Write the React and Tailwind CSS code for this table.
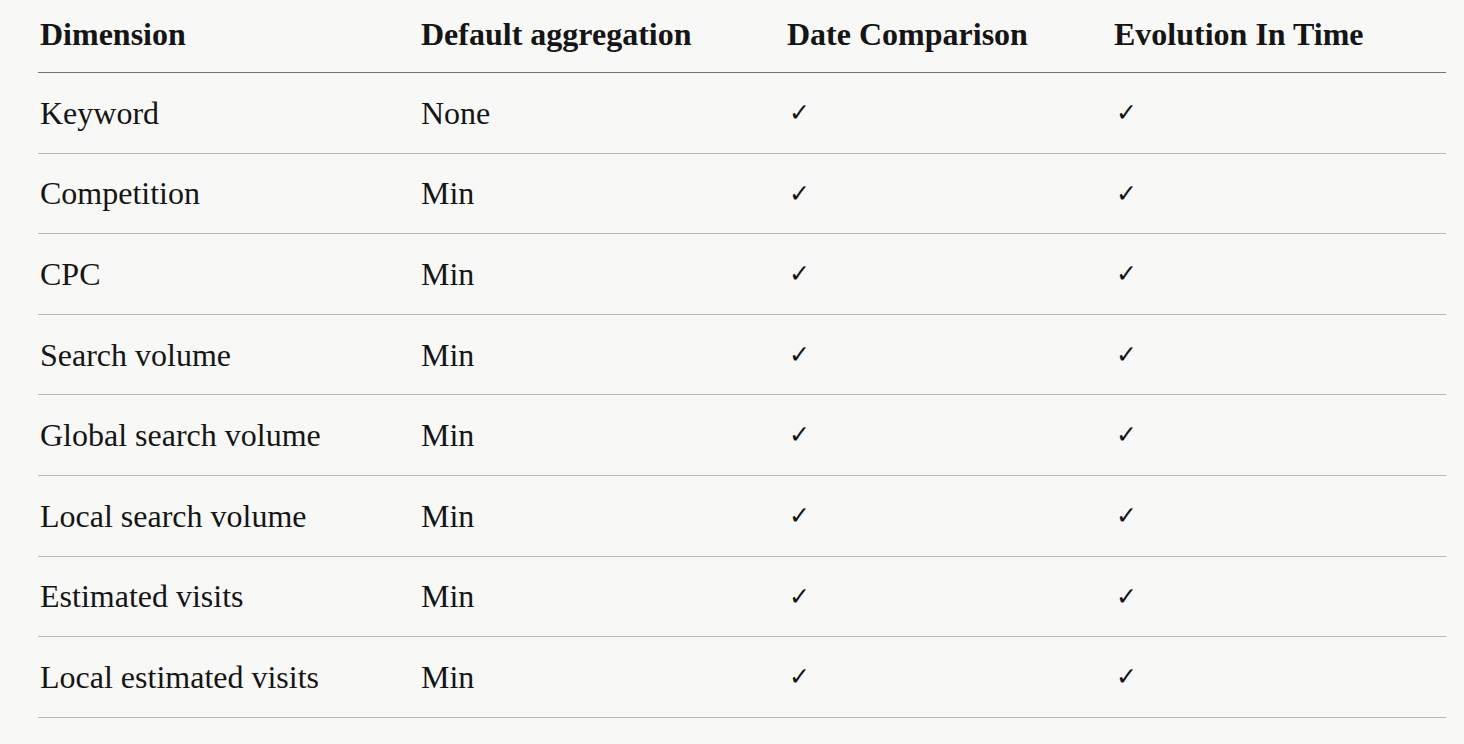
const rows = [
  ["Keyword", "None"],
  ["Competition", "Min"],
  ["CPC", "Min"],
  ["Search volume", "Min"],
  ["Global search volume", "Min"],
  ["Local search volume", "Min"],
  ["Estimated visits", "Min"],
  ["Local estimated visits", "Min"],
];

export default function App() {
  return (
    <div className="min-h-screen w-full bg-[#f8f8f6] text-[#151515] [font-family:'Liberation_Serif',serif]">
      <div className="ml-[38px] w-[1408px]">
        <div className="grid grid-cols-[381px_366px_327px_1fr] h-[73px] items-center border-b border-[#747474] text-[32px] font-bold">
          <div className="pl-[2px] pb-[4px]">Dimension</div>
          <div className="pl-[2px] pb-[4px]">Default aggregation</div>
          <div className="pl-[2px] pb-[4px]">Date Comparison</div>
          <div className="pl-[2px] pb-[4px]">Evolution In Time</div>
        </div>
        {rows.map(([dim, agg]) => (
          <div
            key={dim}
            className="grid grid-cols-[381px_366px_327px_1fr] h-[80.6px] items-center border-b border-[#b8b8b8] text-[32px]"
          >
            <div className="pl-[2px]">{dim}</div>
            <div className="pl-[2px]">{agg}</div>
            <div className="pl-[4px] text-[25px] [font-family:'DejaVu_Sans',sans-serif] font-light">✓</div>
            <div className="pl-[4px] text-[25px] [font-family:'DejaVu_Sans',sans-serif] font-light">✓</div>
          </div>
        ))}
      </div>
    </div>
  );
}
